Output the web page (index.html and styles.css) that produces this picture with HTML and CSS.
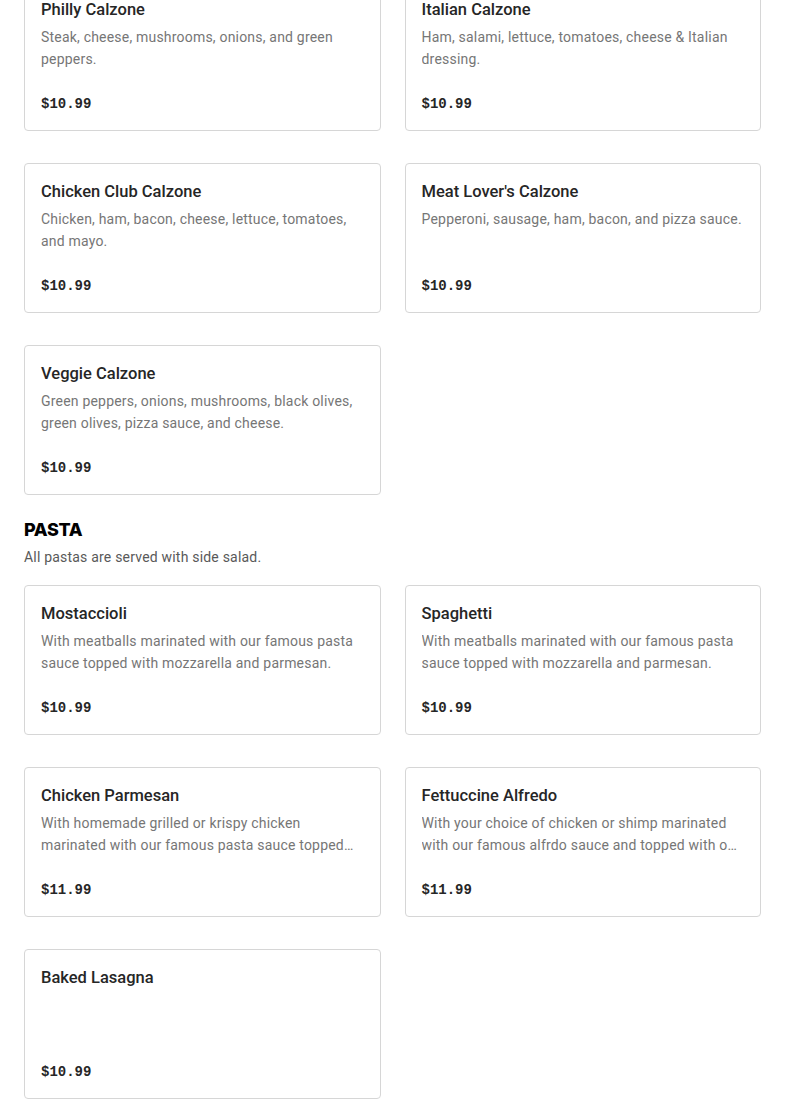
FILE: index.html
```html
<!DOCTYPE html>
<html>
<head>
<meta charset="utf-8">
<link rel="stylesheet" href="styles.css">
</head>
<body>
<main class="menu">
  <section class="section section-top">
    <div class="grid">
      <div class="card"><h3 class="title">Philly Calzone</h3><p class="desc">Steak, cheese, mushrooms, onions, and green peppers.</p><div class="price">$10.99</div></div>
      <div class="card"><h3 class="title">Italian Calzone</h3><p class="desc">Ham, salami, lettuce, tomatoes, cheese &amp; Italian dressing.</p><div class="price">$10.99</div></div>
      <div class="card"><h3 class="title">Chicken Club Calzone</h3><p class="desc">Chicken, ham, bacon, cheese, lettuce, tomatoes, and mayo.</p><div class="price">$10.99</div></div>
      <div class="card"><h3 class="title">Meat Lover's Calzone</h3><p class="desc">Pepperoni, sausage, ham, bacon, and pizza sauce.</p><div class="price">$10.99</div></div>
      <div class="card"><h3 class="title">Veggie Calzone</h3><p class="desc">Green peppers, onions, mushrooms, black olives, green olives, pizza sauce, and cheese.</p><div class="price">$10.99</div></div>
    </div>
  </section>
  <section class="section">
    <h2 class="section-title">PASTA</h2>
    <p class="section-sub">All pastas are served with side salad.</p>
    <div class="grid">
      <div class="card"><h3 class="title">Mostaccioli</h3><p class="desc">With meatballs marinated with our famous pasta sauce topped with mozzarella and parmesan.</p><div class="price">$10.99</div></div>
      <div class="card"><h3 class="title">Spaghetti</h3><p class="desc">With meatballs marinated with our famous pasta sauce topped with mozzarella and parmesan.</p><div class="price">$10.99</div></div>
      <div class="card"><h3 class="title">Chicken Parmesan</h3><p class="desc">With homemade grilled or krispy chicken marinated with our famous pasta sauce topped with mozzarella and parmesan.</p><div class="price">$11.99</div></div>
      <div class="card"><h3 class="title">Fettuccine Alfredo</h3><p class="desc">With your choice of chicken or shimp marinated with our famous alfrdo sauce and topped with our parmesan cheese.</p><div class="price">$11.99</div></div>
      <div class="card"><h3 class="title">Baked Lasagna</h3><div class="price">$10.99</div></div>
    </div>
  </section>
</main>
</body>
</html>
```
FILE: styles.css
```css
html, body {
  margin: 0;
  padding: 0;
  background: #ffffff;
}
body {
  font-family: Roboto, "Liberation Sans", Arial, sans-serif;
  color: #262626;
}
.menu {
  padding: 0 24px;
  margin-top: -19px;
}
.grid {
  display: grid;
  grid-template-columns: 1fr 1fr;
  column-gap: 24px;
  row-gap: 32px;
}
.card {
  box-sizing: border-box;
  height: 150px;
  border: 1px solid #d6d6d6;
  border-radius: 4px;
  padding: 16px 16px 15px;
  display: flex;
  flex-direction: column;
}
.title {
  margin: 0;
  font-size: 16.5px;
  font-weight: 500;
  line-height: 24px;
  color: #262626;
}
.desc {
  margin: 4px 0 0;
  font-size: 14px;
  line-height: 22px;
  letter-spacing: 0.2px;
  color: #767676;
  display: -webkit-box;
  -webkit-line-clamp: 2;
  -webkit-box-orient: vertical;
  overflow: hidden;
}
.price {
  margin-top: auto;
  font-family: "Liberation Mono", "DejaVu Sans Mono", monospace;
  font-weight: 700;
  font-size: 14px;
  line-height: 22px;
  color: #262626;
}
.section-title {
  margin: 23px 0 0;
  font-family: Inter, Roboto, sans-serif;
  font-size: 18px;
  font-weight: 800;
  line-height: 24px;
  color: #000;
  letter-spacing: -0.3px;
}
.section-sub {
  margin: 4px 0 17px;
  font-size: 14px;
  line-height: 22px;
  letter-spacing: 0.2px;
  color: #595959;
}
```
